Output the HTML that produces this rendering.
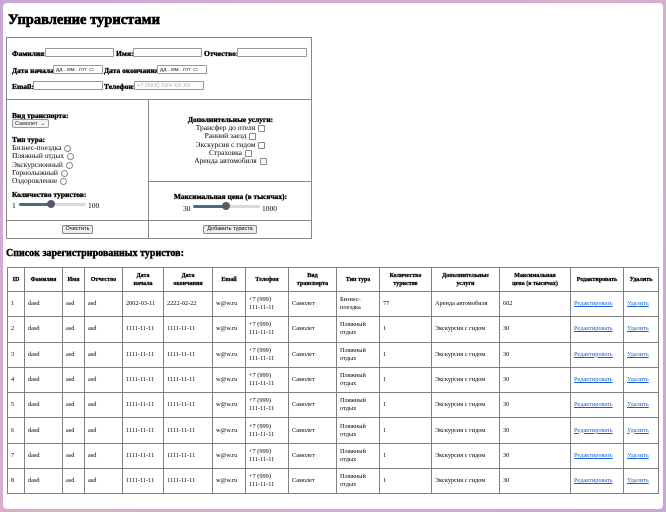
<!DOCTYPE html>
<html><head><meta charset="utf-8"><style>
html,body{margin:0;padding:0;}
body{width:666px;height:512px;background:linear-gradient(135deg,#c9a8d6,#d9b0cc 50%,#c8a6d8);position:relative;overflow:hidden;font-family:"Liberation Serif","DejaVu Serif",serif;font-size:7.5px;color:#000;}
#win{position:absolute;left:3px;top:3px;width:660px;height:506px;background:#fff;border-radius:4px;}
.a{position:absolute;white-space:nowrap;}
.b{font-weight:bold;-webkit-text-stroke:0.35px #000;}
.in{position:absolute;height:9px;border:1px solid #999;border-radius:1px;background:#fff;box-sizing:border-box;font-family:"Liberation Sans",sans-serif;font-size:5.5px;color:#666;line-height:8px;padding-left:2px;}
.line{position:absolute;background:#888;}
.rad{display:inline-block;width:5px;height:5px;border:1px solid #888;border-radius:50%;vertical-align:middle;margin-left:3px;}
.chk{display:inline-block;width:5px;height:5px;border:1px solid #888;border-radius:1px;vertical-align:middle;margin-left:3px;}
.btn{position:absolute;height:9px;border:1px solid #888;border-radius:2px;background:#efefef;box-sizing:border-box;font-family:"Liberation Sans",sans-serif;font-size:5.5px;line-height:7px;text-align:center;}
.trk{position:absolute;height:3px;background:#d9d9d9;border-radius:2px;}
.fill{position:absolute;height:3px;background:#4e6a7a;border-radius:2px;}
.th{position:absolute;width:8px;height:8px;border-radius:50%;background:#555a66;}
table{position:absolute;left:4px;top:264px;border-collapse:collapse;font-size:6.3px;table-layout:fixed;width:651px;}
td,th{border:1px solid #808080;padding:0 3px;text-align:left;line-height:8px;overflow:hidden;}
th{font-weight:bold;-webkit-text-stroke:0.25px #000;text-align:center;height:23px;font-size:6px;}
td{height:24.3px;}
a{color:#1a5fd0;text-decoration:underline;}
</style></head><body><div id="win">
<div class="a b" style="left:5px;top:9px;font-size:14.5px;-webkit-text-stroke:0.6px #000;">Управление туристами</div>

<div style="position:absolute;left:3px;top:34px;width:306px;height:202px;border:1px solid #888;box-sizing:border-box;"></div>
<div class="line" style="left:3px;top:96px;width:306px;height:1px;"></div>
<div class="line" style="left:145px;top:96px;width:1px;height:140px;"></div>
<div class="line" style="left:145px;top:178px;width:164px;height:1px;"></div>
<div class="line" style="left:3px;top:217px;width:306px;height:1px;"></div>

<div class="a b" style="left:9px;top:46px;">Фамилия:</div><div class="in" style="left:42px;top:45px;width:69px;"></div>
<div class="a b" style="left:113px;top:46px;">Имя:</div><div class="in" style="left:130px;top:45px;width:69px;"></div>
<div class="a b" style="left:201px;top:46px;">Отчество:</div><div class="in" style="left:234px;top:45px;width:70px;"></div>

<div class="a b" style="left:9px;top:63px;">Дата начала:</div><div class="in" style="left:50px;top:62px;width:50px;color:#333;">дд . мм . гггг ▭</div>
<div class="a b" style="left:101px;top:63px;">Дата окончания:</div><div class="in" style="left:154px;top:62px;width:50px;color:#333;">дд . мм . гггг ▭</div>

<div class="a b" style="left:9px;top:79px;">Email:</div><div class="in" style="left:30px;top:78px;width:70px;"></div>
<div class="a b" style="left:101px;top:79px;">Телефон:</div><div class="in" style="left:131px;top:78px;width:70px;color:#aaa;">+7 (XXX) XXX-XX-XX</div>

<div class="a b" style="left:9px;top:108px;">Вид транспорта:</div>
<div class="in" style="left:9px;top:116px;width:37px;color:#222;border-radius:2px;background:#f4f4f4;">Самолет &nbsp;⌄</div>
<div class="a b" style="left:9px;top:132px;">Тип тура:</div>
<div class="a" style="left:9px;top:140px;">Бизнес-поездка<span class="rad"></span></div>
<div class="a" style="left:9px;top:148px;">Пляжный отдых<span class="rad"></span></div>
<div class="a" style="left:9px;top:157px;">Экскурсионный<span class="rad"></span></div>
<div class="a" style="left:9px;top:165px;">Горнолыжный<span class="rad"></span></div>
<div class="a" style="left:9px;top:173px;">Оздоровление<span class="rad"></span></div>
<div class="a b" style="left:9px;top:187px;">Количество туристов:</div>
<div class="a" style="left:9px;top:198px;">1</div>
<div class="trk" style="left:16px;top:200px;width:67px;"></div><div class="fill" style="left:16px;top:200px;width:32px;"></div><div class="th" style="left:44px;top:197px;"></div>
<div class="a" style="left:85px;top:198px;">100</div>

<div class="a b" style="left:146px;top:112px;width:163px;text-align:center;">Дополнительные услуги:</div>
<div class="a" style="left:146px;top:120px;width:163px;text-align:center;">Трансфер до отеля<span class="chk"></span></div>
<div class="a" style="left:146px;top:128px;width:163px;text-align:center;">Ранний заезд<span class="chk"></span></div>
<div class="a" style="left:146px;top:137px;width:163px;text-align:center;">Экскурсия с гидом<span class="chk"></span></div>
<div class="a" style="left:146px;top:145px;width:163px;text-align:center;">Страховка<span class="chk"></span></div>
<div class="a" style="left:146px;top:153px;width:163px;text-align:center;">Аренда автомобиля<span class="chk"></span></div>
<div class="a b" style="left:146px;top:189px;width:163px;text-align:center;">Максимальная цена (в тысячах):</div>
<div class="a" style="left:180px;top:201px;">30</div>
<div class="trk" style="left:190px;top:202px;width:67px;"></div><div class="fill" style="left:190px;top:202px;width:33px;"></div><div class="th" style="left:219px;top:199px;"></div>
<div class="a" style="left:259px;top:201px;">1000</div>

<div class="btn" style="left:59px;top:222px;width:31px;">Очистить</div>
<div class="btn" style="left:200px;top:222px;width:54px;">Добавить туриста</div>

<div class="a b" style="left:3px;top:245px;font-size:10px;-webkit-text-stroke:0.4px #000;">Список зарегистрированных туристов:</div>

<table>
<colgroup><col style="width:17px"><col style="width:38px"><col style="width:22px"><col style="width:38px"><col style="width:41px"><col style="width:49px"><col style="width:33px"><col style="width:43px"><col style="width:48px"><col style="width:43px"><col style="width:52px"><col style="width:68px"><col style="width:71px"><col style="width:53px"><col style="width:35px"></colgroup>
<tr><th>ID</th><th>Фамилия</th><th>Имя</th><th>Отчество</th><th>Дата<br>начала</th><th>Дата<br>окончания</th><th>Email</th><th>Телефон</th><th>Вид<br>транспорта</th><th>Тип тура</th><th>Количество<br>туристов</th><th>Дополнительные<br>услуги</th><th>Максимальная<br>цена (в тысячах)</th><th>Редактировать</th><th>Удалить</th></tr>
<tr><td>1</td><td>dasd</td><td>asd</td><td>asd</td><td>2002-03-11</td><td>2222-02-22</td><td>w@w.ru</td><td>+7 (999)<br>111-11-11</td><td>Самолет</td><td>Бизнес-<br>поездка</td><td>77</td><td>Аренда автомобиля</td><td>602</td><td><a>Редактировать</a></td><td><a>Удалить</a></td></tr>
<tr><td>2</td><td>dasd</td><td>asd</td><td>asd</td><td>1111-11-11</td><td>1111-11-11</td><td>w@w.ru</td><td>+7 (999)<br>111-11-11</td><td>Самолет</td><td>Пляжный<br>отдых</td><td>1</td><td>Экскурсия с гидом</td><td>30</td><td><a>Редактировать</a></td><td><a>Удалить</a></td></tr>
<tr><td>3</td><td>dasd</td><td>asd</td><td>asd</td><td>1111-11-11</td><td>1111-11-11</td><td>w@w.ru</td><td>+7 (999)<br>111-11-11</td><td>Самолет</td><td>Пляжный<br>отдых</td><td>1</td><td>Экскурсия с гидом</td><td>30</td><td><a>Редактировать</a></td><td><a>Удалить</a></td></tr>
<tr><td>4</td><td>dasd</td><td>asd</td><td>asd</td><td>1111-11-11</td><td>1111-11-11</td><td>w@w.ru</td><td>+7 (999)<br>111-11-11</td><td>Самолет</td><td>Пляжный<br>отдых</td><td>1</td><td>Экскурсия с гидом</td><td>30</td><td><a>Редактировать</a></td><td><a>Удалить</a></td></tr>
<tr><td>5</td><td>dasd</td><td>asd</td><td>asd</td><td>1111-11-11</td><td>1111-11-11</td><td>w@w.ru</td><td>+7 (999)<br>111-11-11</td><td>Самолет</td><td>Пляжный<br>отдых</td><td>1</td><td>Экскурсия с гидом</td><td>30</td><td><a>Редактировать</a></td><td><a>Удалить</a></td></tr>
<tr><td>6</td><td>dasd</td><td>asd</td><td>asd</td><td>1111-11-11</td><td>1111-11-11</td><td>w@w.ru</td><td>+7 (999)<br>111-11-11</td><td>Самолет</td><td>Пляжный<br>отдых</td><td>1</td><td>Экскурсия с гидом</td><td>30</td><td><a>Редактировать</a></td><td><a>Удалить</a></td></tr>
<tr><td>7</td><td>dasd</td><td>asd</td><td>asd</td><td>1111-11-11</td><td>1111-11-11</td><td>w@w.ru</td><td>+7 (999)<br>111-11-11</td><td>Самолет</td><td>Пляжный<br>отдых</td><td>1</td><td>Экскурсия с гидом</td><td>30</td><td><a>Редактировать</a></td><td><a>Удалить</a></td></tr>
<tr><td>8</td><td>dasd</td><td>asd</td><td>asd</td><td>1111-11-11</td><td>1111-11-11</td><td>w@w.ru</td><td>+7 (999)<br>111-11-11</td><td>Самолет</td><td>Пляжный<br>отдых</td><td>1</td><td>Экскурсия с гидом</td><td>30</td><td><a>Редактировать</a></td><td><a>Удалить</a></td></tr>
</table>
</div></body></html>
